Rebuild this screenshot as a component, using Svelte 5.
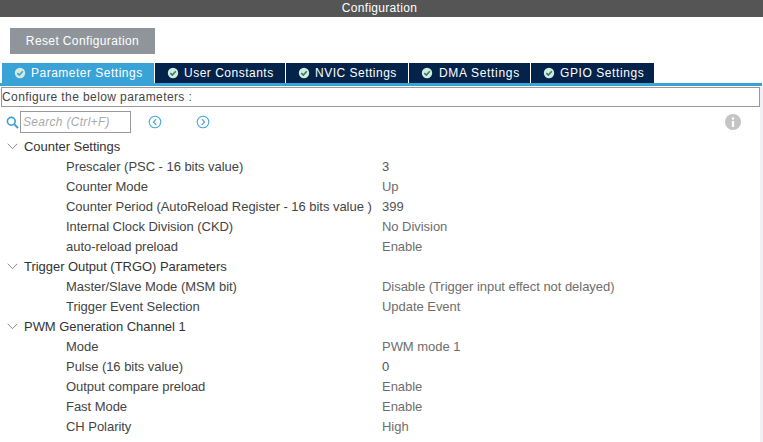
<script>
  const tabs = [
    { label: 'Parameter Settings', width: 153 },
    { label: 'User Constants', width: 131 },
    { label: 'NVIC Settings', width: 123 },
    { label: 'DMA Settings', width: 122 },
    { label: 'GPIO Settings', width: 124 }
  ];
  const groups = [
    { name: 'Counter Settings', rows: [
      ['Prescaler (PSC - 16 bits value)', '3', 1],
      ['Counter Mode', 'Up', 0],
      ['Counter Period (AutoReload Register - 16 bits value )', '399', 1],
      ['Internal Clock Division (CKD)', 'No Division', 0],
      ['auto-reload preload', 'Enable', 0]
    ]},
    { name: 'Trigger Output (TRGO) Parameters', rows: [
      ['Master/Slave Mode (MSM bit)', 'Disable (Trigger input effect not delayed)', 0],
      ['Trigger Event Selection', 'Update Event', 0]
    ]},
    { name: 'PWM Generation Channel 1', rows: [
      ['Mode', 'PWM mode 1', 0],
      ['Pulse (16 bits value)', '0', 1],
      ['Output compare preload', 'Enable', 0],
      ['Fast Mode', 'Enable', 0],
      ['CH Polarity', 'High', 0]
    ]}
  ];
</script>

<div class="page">
  <div class="title">Configuration</div>
  <div class="toolbar"><button class="reset">Reset Configuration</button></div>
  <div class="tabs">
    {#each tabs as t, i}
      <div class="tab" class:active={i === 0} style="width: {t.width}px">
        <svg width="12" height="12" viewBox="0 0 12 12">
          <circle cx="6" cy="6" r="5.2" fill="#d3ebdc" />
          <path d="M3.3 6.1 L5.3 8 L8.8 4.3" fill="none" stroke={i === 0 ? '#3fa5d6' : '#2a7f6a'} stroke-width="1.6" />
        </svg>
        <span>{t.label}</span>
      </div>
    {/each}
  </div>
  <div class="rule"></div>
  <div class="content">
    <div class="hint">Configure the below parameters :</div>
    <div class="search">
      <svg class="glass" width="13" height="13" viewBox="0 0 13 13">
        <circle cx="5.3" cy="5.3" r="3.9" fill="none" stroke="#3a9fd0" stroke-width="1.6" />
        <path d="M8.2 8.2 L12 12" stroke="#3a9fd0" stroke-width="1.8" />
      </svg>
      <div class="field">Search (Ctrl+F)</div>
      <svg class="nav first" width="14" height="14" viewBox="0 0 14 14">
        <circle cx="7" cy="7" r="5.8" fill="none" stroke="#4aa8d4" stroke-width="1.1" />
        <path d="M8.2 4.2 L5.4 7 L8.2 9.8" fill="none" stroke="#4aa8d4" stroke-width="1.2" />
      </svg>
      <svg class="nav second" width="14" height="14" viewBox="0 0 14 14">
        <circle cx="7" cy="7" r="5.8" fill="none" stroke="#4aa8d4" stroke-width="1.1" />
        <path d="M5.8 4.2 L8.6 7 L5.8 9.8" fill="none" stroke="#4aa8d4" stroke-width="1.2" />
      </svg>
      <svg class="info" width="16" height="16" viewBox="0 0 16 16">
        <circle cx="8" cy="8" r="8" fill="#c4c4c4" />
        <rect x="6.9" y="7" width="2.2" height="6" fill="#fff" />
        <rect x="6.9" y="3.4" width="2.2" height="2.2" fill="#fff" />
      </svg>
    </div>
    <div class="tree">
      {#each groups as g}
        <div class="group">
          <svg width="11" height="7" viewBox="0 0 11 7"><path d="M0.7 0.8 L5.5 5.6 L10.3 0.8" fill="none" stroke="#8a8a8a" stroke-width="1" /></svg>
          <span>{g.name}</span>
        </div>
        {#each g.rows as r}
          <div class="row">
            <span class="key">{r[0]}</span>
            <span class="val" class:dark={r[2]}>{r[1]}</span>
          </div>
        {/each}
      {/each}
    </div>
  </div>
</div>

<style>
  :global(body) { margin: 0; background: #fff; }
  .page {
    width: 763px;
    height: 442px;
    overflow: hidden;
    font-family: "Liberation Sans", Arial, sans-serif;
    font-size: 12px;
    color: #444;
    background: #fff;
  }
  .title {
    height: 17px;
    background: #555;
    color: #fff;
    text-align: center;
    line-height: 16px;
    letter-spacing: 0.3px;
    padding-right: 4px;
  }
  .reset {
    display: block;
    width: 145px;
    height: 26px;
    padding: 0;
    border: 0;
    background: #8f959b;
    color: #fff;
    font: inherit;
    letter-spacing: 0.38px;
  }
  .toolbar { height: 46px; padding: 11px 0 0 10px; box-sizing: border-box; }
  .tabs { display: flex; height: 20px; padding-left: 2px; }
  .tab {
    box-sizing: border-box;
    display: flex;
    align-items: center;
    gap: 5px;
    padding-left: 12px;
    background: #03234b;
    color: #fff;
    letter-spacing: 0.5px;
    border-right: 1px solid #fff;
  }
  .tab:nth-child(4) { letter-spacing: 0.68px; padding-left: 12px; gap: 6px; }
  .tab:nth-child(5) { letter-spacing: 0.58px; }
  .tab.active { background: #39a3d8; }
  .rule { height: 3px; background: #39a3d8; margin-right: 1px; }
  .content {
    box-sizing: border-box;
    height: 356px;
    border-right: 3px solid #f1f1f5;
  }
  .hint {
    box-sizing: border-box;
    height: 20px;
    margin: 1px 0 0 1px;
    border: 1px solid #999;
    line-height: 19px;
    letter-spacing: 0.4px;
    color: #444;
  }
  .search { display: flex; align-items: center; height: 24px; margin-top: 3px; }
  .glass { margin-left: 6px; }
  .field {
    box-sizing: border-box;
    width: 111px;
    height: 22px;
    margin-left: 1px;
    border: 1px solid #999;
    line-height: 20px;
    padding-left: 2px;
    font-style: italic;
    color: #aaa;
    letter-spacing: 0.3px;
  }
  .nav.first { margin-left: 17px; }
  .nav.second { margin-left: 34px; }
  .info { margin-left: auto; margin-right: 19px; }
  .tree { margin-top: 2px; font-size: 13px; letter-spacing: -0.04px; }
  .group, .row { height: 20px; display: flex; align-items: center; white-space: nowrap; }
  .group { padding-left: 7px; gap: 6px; color: #333; }
  .row { padding-left: 66px; }
  .key { width: 316px; flex: none; }
  .val { color: #6e6e6e; }
  .val.dark { color: #555; }
</style>
